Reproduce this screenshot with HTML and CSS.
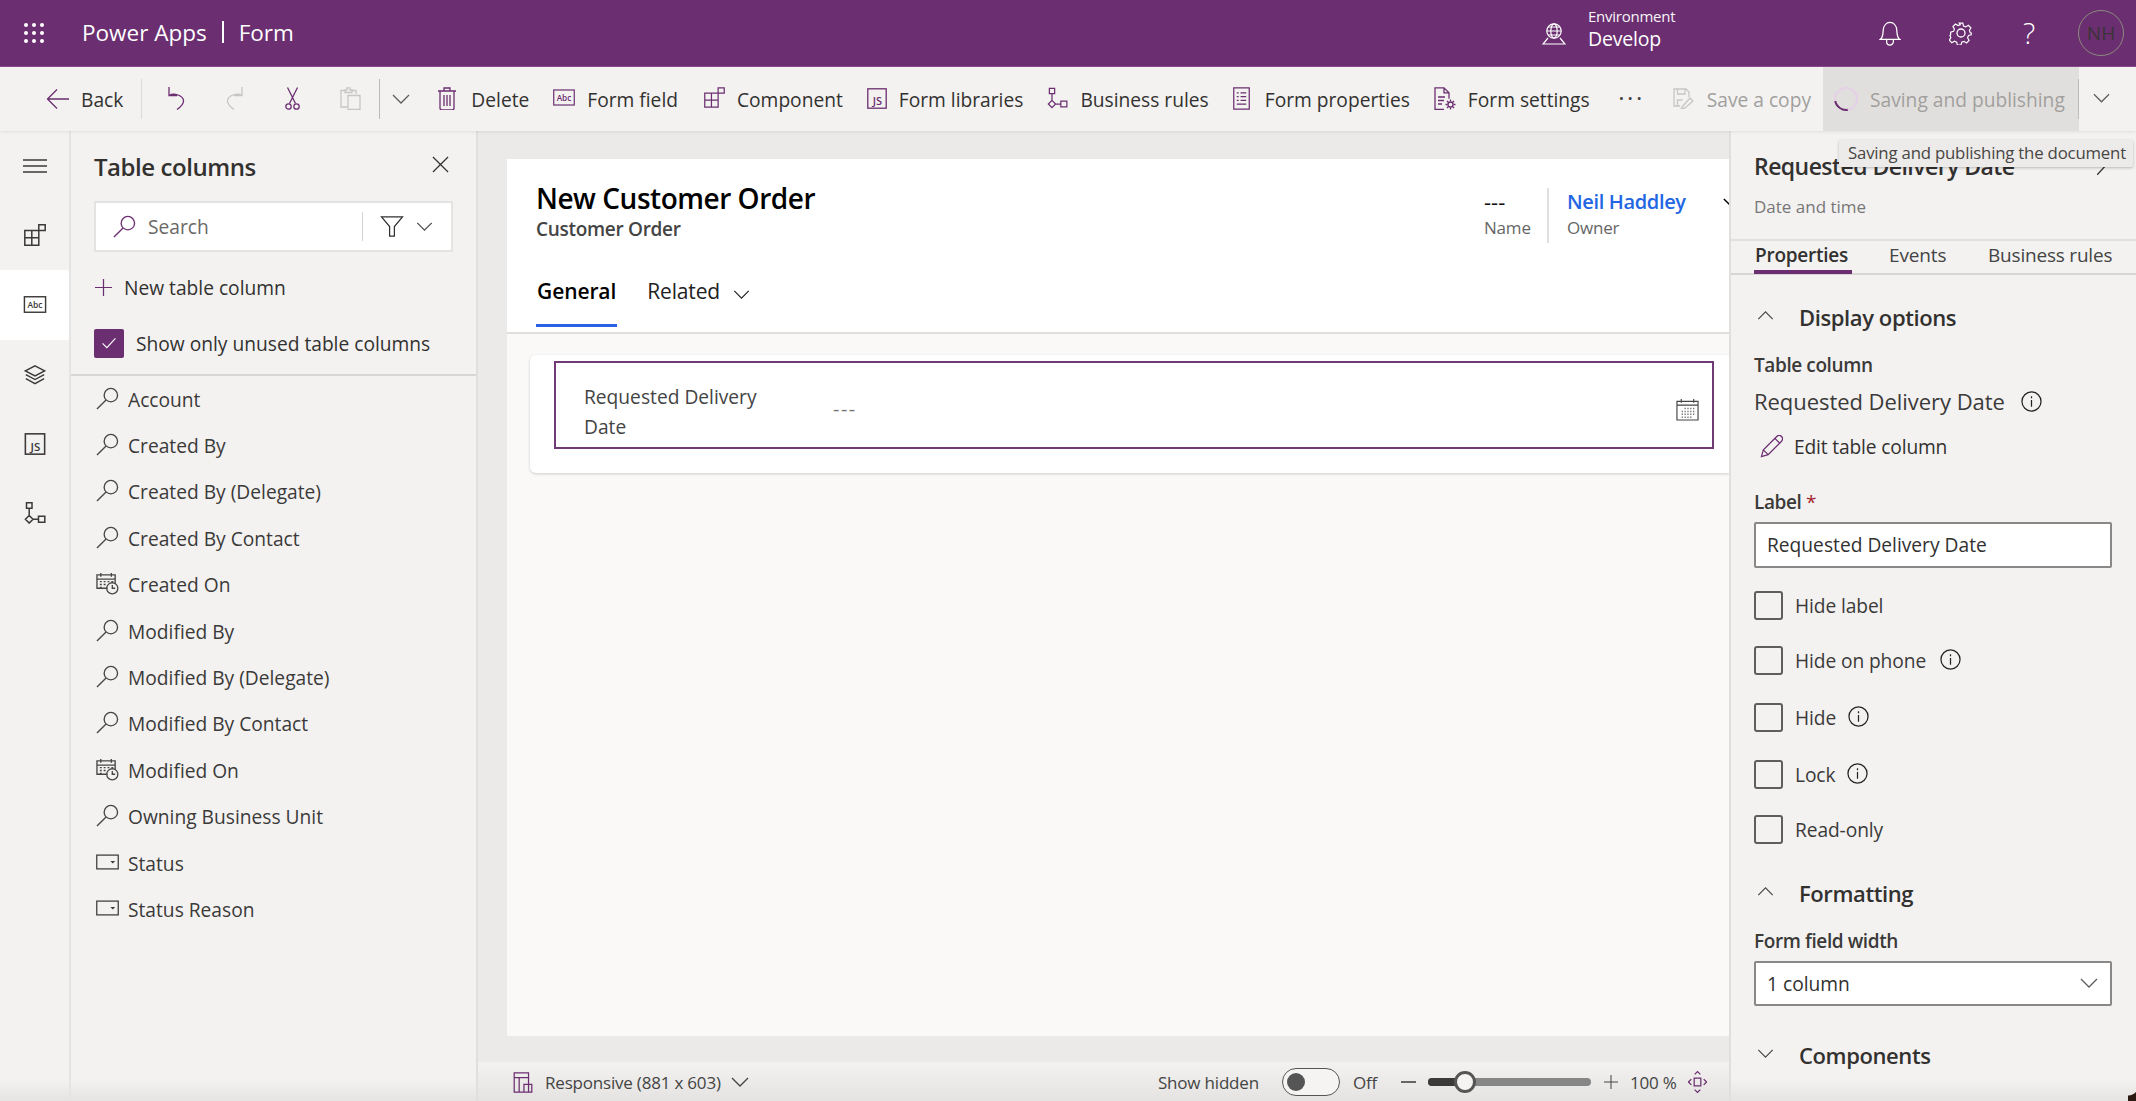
FILE: index.html
```html
<!DOCTYPE html>
<html lang="en">
<head>
<meta charset="utf-8">
<title>Power Apps | Form</title>
<link rel="stylesheet" href="styles.css">
</head>
<body>
<svg class="defs" aria-hidden="true">
  <defs>
    <symbol id="i-back" viewBox="0 0 24 24"><path d="M23 12H2M11 2.500 1.500 12l9.500 9.500"/></symbol>
    <symbol id="i-undo" viewBox="0 0 18 24"><path d="M2 1v8.500h8M2 9.500c5-3 14 0 14.500 5 .3 3-3 6.500-6.500 9"/></symbol>
    <symbol id="i-redo" viewBox="0 0 18 24"><path d="M16 1v8.500H8M16 9.500c-5-3-14 0-14.500 5-.3 3 3 6.500 6.500 9"/></symbol>
    <symbol id="i-cut" viewBox="0 0 15 23"><path d="M2.500 .5 10.500 16.500M12.500 .5 4.500 16.500"/><circle cx="3.500" cy="19.500" r="2.700"/><circle cx="11.500" cy="19.500" r="2.700"/></symbol>
    <symbol id="i-paste" viewBox="0 0 21 23"><path d="M7 20H1V3.500h4M12 3.500h4V7M5 5.500V3h2V.8h3V3h2v2.500zM8 8.500h12V22.500H8z"/></symbol>
    <symbol id="i-chev" viewBox="0 0 18 10"><path d="M1 1l8 8 8-8"/></symbol>
    <symbol id="i-trash" viewBox="0 0 18 23"><path d="M0 4h18M6 4V1h6v3M2 4v17a2 2 0 0 0 2 2h10a2 2 0 0 0 2-2V4M6 8v11M9 8v11M12 8v11"/></symbol>
    <symbol id="i-abc" viewBox="0 0 24 18"><rect x=".8" y=".8" width="22.400" height="16.400"/><text class="svg-text" x="12" y="13" text-anchor="middle">Abc</text></symbol>
    <symbol id="i-comp" viewBox="0 0 22 22"><path d="M.8 6.500h14v14.700H.8zM.8 13.800h14M7.800 6.500v14.700M14.800 .8h6.400v5.700h-6.400z"/></symbol>
    <symbol id="i-js" viewBox="0 0 20 21"><rect x=".8" y=".8" width="18.400" height="19.400"/><text class="svg-text svg-js" x="10.500" y="17" text-anchor="middle">JS</text></symbol>
    <symbol id="i-rules" viewBox="0 0 22 22"><path d="M2.500.8h5.500v5.500H2.500zM5.200 6.300v7.200M5.200 13.500l3.800 3.800-3.800 3.800-3.800-3.800zM9 17.300h5.500M14.500 14.300h6.300v6h-6.300z"/></symbol>
    <symbol id="i-props" viewBox="0 0 18 24"><path d="M.8.800h16.400v22.400H.8zM4 6h2M8 6h6M4 10h2M8 10h6M4 14h2M8 14h6M4 18h10"/></symbol>
    <symbol id="i-settings" viewBox="0 0 22 23"><path d="M10 22.500H1V.8h9l5 5v6M10 .8v5h5M4 10h7M4 13.500h6M4 17h4"/><circle cx="16.500" cy="17.500" r="2.500"/><path d="M16.500 12.500v2M16.500 20.500v2M11.500 17.500h2M19.500 17.500h2M13 14l1.500 1.500M18.500 19.500 20 21M20 14l-1.500 1.500M14.500 19.500 13 21"/></symbol>
    <symbol id="i-save" viewBox="0 0 22 21"><path d="M7 18H1V1h12l3 3v5M4.500 1v5h7.500V1M4.500 18v-6h5M9 19l8-9 3 3-8 7-4 1z"/></symbol>
    <symbol id="i-grid" viewBox="0 0 22 22"><circle cx="3" cy="3" r="2"/><circle cx="11" cy="3" r="2"/><circle cx="19" cy="3" r="2"/><circle cx="3" cy="11" r="2"/><circle cx="11" cy="11" r="2"/><circle cx="19" cy="11" r="2"/><circle cx="3" cy="19" r="2"/><circle cx="11" cy="19" r="2"/><circle cx="19" cy="19" r="2"/></symbol>
    <symbol id="i-globe" viewBox="0 0 24 22"><circle cx="12" cy="8" r="7.200"/><ellipse cx="12" cy="8" rx="3.200" ry="7.200"/><path d="M4.800 8h14.400M6 4h12M6 12h12M6 15l-5 6h22l-5-6"/></symbol>
    <symbol id="i-bell" viewBox="0 0 22 26"><path d="M1 19c3-2 2.500-6 3-10 .5-4 3-7.500 7-7.500s6.500 3.500 7 7.500c.5 4 0 8 3 10zM7.500 19.500v2a3.500 3.500 0 0 0 7 0v-2"/></symbol>
    <symbol id="i-gear" viewBox="0 0 24 24"><circle cx="12" cy="12" r="4"/><path d="M10 1h4l.8 3.200 2.500 1 2.900-1.700 2.800 2.800-1.700 2.900 1 2.500L23.500 12l-.2 2-3 .8-1 2.500 1.700 2.900-2.800 2.800-2.900-1.700-2.500 1-.8 3h-4l-.8-3.200-2.500-1-2.900 1.700-2.800-2.800 1.700-2.900-1-2.500L.5 14v-3l3.200-.8 1-2.500L3 4.800 5.800 2l2.900 1.700 2.500-1z" transform="translate(1.200 1.200) scale(.9)"/></symbol>
    <symbol id="i-menu" viewBox="0 0 24 14"><path d="M0 1h24M0 7h24M0 13h24"/></symbol>
    <symbol id="i-layers" viewBox="0 0 24 22"><path d="M12 1l10.500 5.500L12 12 1.500 6.500zM2 10.500 12 16l10-5.500M2 15l10 5.500L22 15"/></symbol>
    <symbol id="i-close" viewBox="0 0 18 18"><path d="M1 1l16 16M17 1 1 17"/></symbol>
    <symbol id="i-slash" viewBox="0 0 11 12"><path d="M0 12 11 0"/></symbol>
    <symbol id="i-lens" viewBox="0 0 24 24"><circle cx="15.500" cy="8.500" r="7"/><path d="M10.500 13.500 1 23"/></symbol>
    <symbol id="i-filter" viewBox="0 0 24 22"><path d="M1 1h22l-8.500 10v10h-5V11z"/></symbol>
    <symbol id="i-plus" viewBox="0 0 18 18"><path d="M9 0v18M0 9h18"/></symbol>
    <symbol id="i-check" viewBox="0 0 18 14"><path d="M1.500 7.500 6.500 12.500 16.500 1.500"/></symbol>
    <symbol id="i-calclock" viewBox="0 0 24 24"><path d="M12 17H1V3h19v9M1 7.500h19M5 1v4M16 1v4M4 10h2M8 10h2M12 10h2M16 10h2M4 13h2M8 13h2M4 16h2M8 16h0"/><circle cx="17" cy="17" r="5.800"/><path d="M17 13.500V17h3"/></symbol>
    <symbol id="i-option" viewBox="0 0 24 16"><rect x=".8" y=".8" width="22.400" height="14.400"/><path class="solid" d="M15 7h5l-2.500 2.500z"/></symbol>
    <symbol id="i-cal" viewBox="0 0 24 24"><path d="M1 3.500h22V23H1zM1 7.500h22M5.500 1v4M18.500 1v4"/><path class="dots" d="M9 11h1M12 11h1M15 11h1M18 11h1M6 14h1M9 14h1M12 14h1M15 14h1M18 14h1M6 17h1M9 17h1M12 17h1M15 17h1M18 17h1M6 20h1M9 20h1M12 20h1M15 20h1"/></symbol>
    <symbol id="i-info" viewBox="0 0 22 22"><circle cx="11" cy="11" r="10"/><path d="M11 9.500v7M11 5.500v2"/></symbol>
    <symbol id="i-pencil" viewBox="0 0 24 24"><path d="M1.500 22.500l2-7L17.500 1.500a2.800 2.800 0 0 1 5 5L8.500 20.500zM3.500 15.500l5 5M15.500 3.500l5 5"/></symbol>
    <symbol id="i-responsive" viewBox="0 0 20 22"><path d="M.8.800h15v20.400H.8zM.8 6h15M6 6v15.200M11 13h8.200v8.200H11z"/></symbol>
    <symbol id="i-fit" viewBox="0 0 20 24"><path d="M6.500 8h7v8h-7zM7 4l3-3 3 3M7 20l3 3 3-3M3.500 9l-3 3 3 3M16.500 9l3 3-3 3"/></symbol>
    <symbol id="i-up" viewBox="0 0 18 10"><path d="M1 9l8-8 8 8"/></symbol>
  </defs>
</svg>

<header class="topbar">
  <svg class="ic-grid"><use href="#i-grid"/></svg>
  <div class="brand"><span>Power Apps</span><span class="brand-sep"></span><span>Form</span></div>
  <div class="top-right">
    <svg class="ic-globe"><use href="#i-globe"/></svg>
    <div class="env"><div class="env-label">Environment</div><div class="env-name">Develop</div></div>
    <svg class="ic-bell"><use href="#i-bell"/></svg>
    <svg class="ic-gear"><use href="#i-gear"/></svg>
    <span class="help">?</span>
    <div class="avatar">NH</div>
  </div>
</header>

<nav class="toolbar">
  <div class="cmd cmd-back"><svg class="tb-i w24"><use href="#i-back"/></svg><span>Back</span></div>
  <span class="tb-sep sep-a"></span>
  <svg class="tb-i ic-undo"><use href="#i-undo"/></svg>
  <svg class="tb-i off ic-redo"><use href="#i-redo"/></svg>
  <svg class="tb-i ic-cut"><use href="#i-cut"/></svg>
  <svg class="tb-i off ic-paste"><use href="#i-paste"/></svg>
  <span class="tb-sep sep-b"></span>
  <svg class="tb-i plain ic-more"><use href="#i-chev"/></svg>
  <div class="cmds">
    <div class="cmd"><svg class="tb-i ic-trash"><use href="#i-trash"/></svg><span>Delete</span></div>
    <div class="cmd"><svg class="tb-i ic-abc"><use href="#i-abc"/></svg><span>Form field</span></div>
    <div class="cmd cmd-comp"><svg class="tb-i ic-comp"><use href="#i-comp"/></svg><span>Component</span></div>
    <div class="cmd"><svg class="tb-i ic-js"><use href="#i-js"/></svg><span>Form libraries</span></div>
    <div class="cmd"><svg class="tb-i ic-rules"><use href="#i-rules"/></svg><span>Business rules</span></div>
    <div class="cmd"><svg class="tb-i ic-props"><use href="#i-props"/></svg><span>Form properties</span></div>
    <div class="cmd"><svg class="tb-i ic-settings"><use href="#i-settings"/></svg><span>Form settings</span></div>
  </div>
  <div class="tb-right">
    <span class="dots-h">···</span>
    <div class="cmd cmd-off"><svg class="tb-i off ic-save"><use href="#i-save"/></svg><span>Save a copy</span></div>
    <div class="saving">
      <span class="spinner"></span><span>Saving and publishing</span>
    </div>
    <div class="split"><svg class="tb-i plain ic-more"><use href="#i-chev"/></svg></div>
  </div>
</nav>

<div class="tooltip">Saving and publishing the document</div>

<main class="main">
  <aside class="rail">
    <div class="rail-item"><svg class="ic-menu"><use href="#i-menu"/></svg></div>
    <div class="rail-item"><svg class="ic-rail"><use href="#i-comp"/></svg></div>
    <div class="rail-item active"><svg class="ic-rail-abc"><use href="#i-abc"/></svg></div>
    <div class="rail-item"><svg class="ic-rail"><use href="#i-layers"/></svg></div>
    <div class="rail-item"><svg class="ic-rail"><use href="#i-js"/></svg></div>
    <div class="rail-item"><svg class="ic-rail"><use href="#i-rules"/></svg></div>
  </aside>

  <aside class="panel">
    <div class="panel-head">
      <h2 class="panel-title">Table columns</h2>
      <svg class="ic-close"><use href="#i-close"/></svg>
    </div>
    <div class="search">
      <svg class="ic-lens purple"><use href="#i-lens"/></svg>
      <span class="search-text">Search</span>
      <span class="search-sep"></span>
      <svg class="ic-filter"><use href="#i-filter"/></svg>
      <svg class="ic-chev-sm"><use href="#i-chev"/></svg>
    </div>
    <div class="new-col"><svg class="ic-plus"><use href="#i-plus"/></svg><span>New table column</span></div>
    <div class="only-unused">
      <span class="check-on"><svg class="ic-check"><use href="#i-check"/></svg></span>
      <span>Show only unused table columns</span>
    </div>
    <ul class="col-list">
      <li><svg class="ic-lens"><use href="#i-lens"/></svg>Account</li>
      <li><svg class="ic-lens"><use href="#i-lens"/></svg>Created By</li>
      <li><svg class="ic-lens"><use href="#i-lens"/></svg>Created By (Delegate)</li>
      <li><svg class="ic-lens"><use href="#i-lens"/></svg>Created By Contact</li>
      <li><svg class="ic-lens"><use href="#i-calclock"/></svg>Created On</li>
      <li><svg class="ic-lens"><use href="#i-lens"/></svg>Modified By</li>
      <li><svg class="ic-lens"><use href="#i-lens"/></svg>Modified By (Delegate)</li>
      <li><svg class="ic-lens"><use href="#i-lens"/></svg>Modified By Contact</li>
      <li><svg class="ic-lens"><use href="#i-calclock"/></svg>Modified On</li>
      <li><svg class="ic-lens"><use href="#i-lens"/></svg>Owning Business Unit</li>
      <li><svg class="ic-option"><use href="#i-option"/></svg>Status</li>
      <li><svg class="ic-option"><use href="#i-option"/></svg>Status Reason</li>
    </ul>
  </aside>

  <section class="center">
    <div class="form">
      <div class="form-head">
        <div class="form-top">
          <div class="form-titles">
            <h1 class="form-title">New Customer Order</h1>
            <div class="form-sub">Customer Order</div>
          </div>
          <div class="head-fields">
            <div class="hf hf-name"><div class="hf-val">---</div><div class="hf-lab">Name</div></div>
            <div class="hf hf-owner"><div class="hf-link">Neil Haddley</div><div class="hf-lab">Owner</div></div>
            <svg class="ic-clip"><use href="#i-chev"/></svg>
          </div>
        </div>
        <div class="form-tabs">
          <div class="ftab ftab-on">General</div>
          <div class="ftab">Related<svg class="ic-rel"><use href="#i-chev"/></svg></div>
        </div>
      </div>
      <div class="form-body">
        <div class="card">
          <div class="field">
            <div class="field-label">Requested Delivery Date</div>
            <div class="field-val">---</div>
            <svg class="ic-cal"><use href="#i-cal"/></svg>
          </div>
        </div>
      </div>
    </div>
    <footer class="status">
      <svg class="ic-resp"><use href="#i-responsive"/></svg>
      <span class="st-text">Responsive (881 x 603)</span>
      <svg class="ic-st-chev"><use href="#i-chev"/></svg>
      <span class="st-text st-hidden">Show hidden</span>
      <span class="toggle"><span class="knob"></span></span>
      <span class="st-text st-off">Off</span>
      <span class="st-minus"></span>
      <span class="slider"><span class="slider-fill"></span><span class="thumb"></span></span>
      <svg class="ic-st-plus"><use href="#i-plus"/></svg>
      <span class="st-text st-pct">100 %</span>
      <svg class="ic-fit"><use href="#i-fit"/></svg>
    </footer>
  </section>

  <aside class="props">
    <div class="props-head">
      <div class="props-title">Requested Delivery Date</div>
      <svg class="ic-props-arrow"><use href="#i-slash"/></svg>
      <div class="props-sub">Date and time</div>
    </div>
    <div class="props-tabs">
      <div class="ptab ptab-on">Properties</div>
      <div class="ptab ptab-ev">Events</div>
      <div class="ptab ptab-br">Business rules</div>
    </div>
    <div class="section-head sh-display"><svg class="ic-sec"><use href="#i-up"/></svg><span>Display options</span></div>
    <div class="lab lab-col">Table column</div>
    <div class="col-name"><span>Requested Delivery Date</span><svg class="ic-info"><use href="#i-info"/></svg></div>
    <div class="edit-col"><svg class="ic-pencil"><use href="#i-pencil"/></svg><span>Edit table column</span></div>
    <div class="lab lab-label">Label <span class="req">*</span></div>
    <div class="input">Requested Delivery Date</div>
    <div class="cb cb-1"><span class="box"></span><span>Hide label</span></div>
    <div class="cb cb-2"><span class="box"></span><span>Hide on phone</span><svg class="ic-info cb-info"><use href="#i-info"/></svg></div>
    <div class="cb cb-3"><span class="box"></span><span>Hide</span><svg class="ic-info cb-info"><use href="#i-info"/></svg></div>
    <div class="cb cb-3"><span class="box"></span><span>Lock</span><svg class="ic-info cb-info"><use href="#i-info"/></svg></div>
    <div class="cb cb-5"><span class="box"></span><span>Read-only</span></div>
    <div class="section-head sh-format"><svg class="ic-sec"><use href="#i-up"/></svg><span>Formatting</span></div>
    <div class="lab lab-width">Form field width</div>
    <div class="input select"><span>1 column</span><svg class="ic-sel"><use href="#i-chev"/></svg></div>
    <div class="section-head sh-comp"><svg class="ic-sec"><use href="#i-chev"/></svg><span>Components</span></div>
  </aside>
</main>
<div class="corner"></div>
</body>
</html>
```
FILE: styles.css
```css
* { box-sizing: border-box; }
html, body { margin: 0; padding: 0; }
body {
  width: 2136px; height: 1101px; overflow: hidden; position: relative;
  display: flex; flex-direction: column;
  font-family: "Open Sans", "Noto Sans", sans-serif;
  font-size: 19.2px; color: #323130;
  background: linear-gradient(#f3f2f1 calc(100% - 22px), #e5e4e2);
}
.defs { position: absolute; width: 0; height: 0; }
svg { display: block; flex: none; fill: none; stroke: currentColor; stroke-width: 1.3; overflow: visible; }
.svg-text { font: 600 9px "Open Sans", sans-serif; fill: currentColor; stroke: none; }
.svg-js { font-size: 11px; }
.solid { fill: currentColor; stroke: none; }
.dots { stroke-width: 1.5; }

/* top bar */
.topbar {
  height: 67px; flex: none; background: #6b2e70; border-bottom: 1px solid #8b4a90; color: #fff;
  display: flex; align-items: center; padding-left: 23px;
}
.ic-grid { width: 22px; height: 22px; fill: #fff; stroke: none; margin-top: -1px; }
.brand { margin-left: 37px; font-size: 22.500px; font-weight: 500; display: flex; align-items: center; margin-top: -2px; }
.brand-sep { width: 2px; height: 22px; background: #fff; margin: 0 15px 0 15px; }
.top-right { margin-left: auto; display: flex; align-items: center; }
.ic-globe { width: 24px; height: 22px; margin-top: 2px; stroke-width: 1.2; }
.env { margin-left: 22px; width: 291px; margin-top: -8px; }
.env-label { font-size: 15px; line-height: 20px; letter-spacing: -.25px; opacity: .95; }
.env-name { font-size: 19.500px; line-height: 26px; letter-spacing: -.2px; }
.ic-bell { width: 22px; height: 25px; }
.ic-gear { width: 24px; height: 24px; margin-left: 48px; }
.help { margin-left: 50px; font-size: 29px; font-weight: 300; line-height: 1; width: 16px; margin-top: -2px; }
.avatar {
  width: 46px; height: 46px; margin-left: 39px; margin-right: 12px; border-radius: 50%;
  border: 1.5px solid #8c8c80; display: flex; align-items: center; justify-content: center;
  color: #3a3338; font-size: 19px;
}

/* toolbar */
.toolbar {
  height: 64px; flex: none; background: #f3f2f1; display: flex; align-items: center;
  padding-left: 46px; position: relative; z-index: 2; box-shadow: 0 1px 3px rgba(0,0,0,.08);
}
.cmd { display: flex; align-items: center; gap: 12px; color: #323130; white-space: nowrap; }
.cmd-back { gap: 11px; }
.cmd-back svg { width: 24px; height: 24px; }
.tb-i { color: #6b2e70; stroke-width: 1.3; }
.tb-i.off { color: #c8c6c4; }
.tb-i.plain { color: #605e5c; }
.w24 { width: 24px; }
.tb-sep { width: 1px; height: 40px; background: #dcdad8; }
.sep-a { margin-left: 18px; }
.sep-b { margin-left: 18px; background: #bdbbb9; }
.ic-undo { width: 18px; height: 24px; margin-left: 25px; margin-top: -2px; }
.ic-redo { width: 18px; height: 24px; margin-left: 41px; margin-top: -2px; }
.ic-cut { width: 15px; height: 23px; margin-left: 41px; margin-top: -1px; }
.ic-paste { width: 21px; height: 23px; margin-left: 40px; margin-top: -1px; }
.ic-more { width: 18px; height: 10px; margin-left: 12px; }
.cmds { display: flex; align-items: center; gap: 24px; margin-left: 28px; }
.ic-trash { width: 18px; height: 23px; margin-right: 3px; margin-top: -2px; }
.ic-abc { width: 22px; height: 17px; margin-top: -4px; }
.cmd-comp { margin-left: 2px; }
.ic-comp { width: 21px; height: 21px; margin-top: -3px; }
.ic-js { width: 20px; height: 21px; margin-top: -2px; }
.ic-rules { width: 21px; height: 22px; margin-top: -3px; }
.ic-props { width: 17px; height: 23px; margin-right: 3px; margin-top: -2px; }
.ic-settings { width: 22px; height: 23px; margin-top: -2px; }
.tb-right { margin-left: auto; display: flex; align-items: center; height: 100%; }
.dots-h { font-size: 24px; color: #444; letter-spacing: 2.500px; margin-right: 28px; line-height: 1; margin-top: -2px; }
.cmd-off { color: #a19f9d; margin-right: 12px; }
.ic-save { width: 22px; height: 21px; margin-top: -2px; }
.saving {
  width: 256px; height: 100%; background: #e1dfdd; color: #a19f9d; display: flex; align-items: center;
  gap: 12px; padding-left: 11px; white-space: nowrap; position: relative;
}
.saving::after { content: ""; position: absolute; right: 0; top: 12px; height: 40px; width: 1px; background: #bdbbb9; }
.spinner {
  width: 24px; height: 24px; border-radius: 50%; border: 2px solid #e6cfe8; border-bottom-color: #6b2e70;
  transform: rotate(35deg); flex: none;
}
.split { width: 57px; }
.split .ic-more { margin-left: 14px; width: 17px; margin-top: -2px; }

/* tooltip */
.tooltip {
  position: absolute; left: 1839px; top: 140px; width: 294px; height: 27px; z-index: 5;
  background: #ecebe9; color: #484644; font-size: 16.800px; line-height: 26px; padding-left: 9px;
  box-shadow: 0 1px 3px rgba(0,0,0,.25); border-radius: 2px; white-space: nowrap; letter-spacing: -.2px;
}

/* main */
.main { flex: 1; display: flex; min-height: 0; }
.rail { width: 71px; flex: none; border-right: 2px solid #e6e4e2; }
.rail-item { height: 69px; display: flex; align-items: center; justify-content: center; color: #3b3a39; width: 69px; }
.rail-item svg { stroke-width: 1.5; }
.rail-item:first-child { height: 60px; padding-top: 10px; }
.rail-item:nth-child(2) { height: 79px; padding-top: 8px; }
.rail-item.active { background: #fff; height: 70px; border-radius: 0 2px 2px 0; }
.ic-menu { width: 24px; height: 14px; }
.ic-rail { width: 22px; height: 22px; }
.ic-rail-abc { width: 24px; height: 17px; margin-top: -2px; }

.panel { width: 407px; flex: none; border-right: 2px solid #e1dfdd; display: flex; flex-direction: column; }
.panel-head { height: 70px; padding: 0 27px 0 23px; display: flex; align-items: center; justify-content: space-between; }
.panel-title { margin: 0; font-size: 24px; font-weight: 600; letter-spacing: -.45px; }
.ic-close { width: 17px; height: 17px; margin-top: -4px; color: #323130; }
.search {
  margin-left: 23px; width: 359px; height: 51px; background: #fff; border: 2px solid #e5e3e1;
  display: flex; align-items: center; padding-left: 17px;
}
.ic-lens { width: 23px; height: 23px; color: #484644; stroke-width: 1.4; }
.ic-lens.purple { color: #6b2e70; }
.search-text { margin-left: 12px; color: #6a6866; width: 62px; }
.search-sep { margin-left: 152px; width: 1px; height: 29px; background: #d5d3d1; }
.ic-filter { width: 24px; height: 21px; margin-left: 17px; color: #323130; }
.ic-chev-sm { width: 17px; height: 9px; margin-left: 12px; color: #484644; }
.new-col { height: 40px; margin-top: 16px; margin-left: 24px; display: flex; align-items: center; gap: 12px; margin-top: 15px; margin-bottom: 1px; }
.ic-plus { width: 17px; height: 17px; color: #6b2e70; }
.only-unused { margin-top: 20px; margin-left: 23px; display: flex; align-items: center; gap: 12px; height: 30px; }
.check-on { width: 30px; height: 29px; background: #6b2e70; border-radius: 2px; display: flex; align-items: center; justify-content: center; }
.ic-check { width: 16px; height: 12px; color: #fff; }
.col-list { list-style: none; margin: 16px 0 0; padding: 0 0 0 25px; border-top: 2px solid #d8d6d4; }
.col-list li { height: 46.4px; display: flex; align-items: center; gap: 9px; color: #3b3a39; }
.col-list svg { margin-top: -2px; }
.ic-option { width: 23px; height: 16px; color: #3b3a39; }

/* center */
.center { width: 1251px; flex: none; background: #ebeae8; display: flex; flex-direction: column; padding-top: 28px; }
.form { margin-left: 29px; height: 877px; flex: none; background: #faf9f8; overflow: hidden; display: flex; flex-direction: column; }
.form-head { height: 175px; flex: none; background: #fff; border-bottom: 2px solid #e1dfdd; padding-left: 29px; }
.form-top { display: flex; justify-content: space-between; height: 106px; }
.form-titles { padding-top: 20px; }
.form-title { margin: 0; font-size: 28px; line-height: 38px; font-weight: 600; color: #000; letter-spacing: -.47px; }
.form-sub { font-size: 19px; font-weight: 600; line-height: 24px; color: #444; letter-spacing: -.3px; }
.head-fields { display: flex; align-items: flex-start; padding-top: 29px; position: relative; width: 245px; }
.hf { height: 55px; }
.hf-name { width: 65px; border-right: 2px solid #e1dfdd; margin-right: 18px; }
.hf-val { font-size: 22px; line-height: 27px; color: #111; }
.hf-lab { font-size: 17px; line-height: 26px; color: #666; letter-spacing: -.2px; }
.hf-link { font-size: 20px; line-height: 27px; color: #2266e3; font-weight: 600; letter-spacing: -.35px; white-space: nowrap; }
.ic-clip { position: absolute; right: -10px; top: 39px; width: 16px; height: 9px; color: #000; stroke-width: 1.6; }
.form-tabs { display: flex; gap: 30px; height: 67px; padding-top: 1px; }
.ftab { font-size: 21px; color: #222; display: flex; align-items: flex-start; padding-top: 11px; height: 61px; letter-spacing: -.15px; }
.ftab-on { font-weight: 600; color: #000; border-bottom: 3px solid #2b62e3; padding-left: 1px; padding-right: 1px; letter-spacing: -.1px; }
.ic-rel { width: 17px; height: 9px; margin-left: 13px; margin-top: 13px; color: #222; }
.form-body { padding: 21px 0 0 23px; }
.card { height: 118px; background: #fff; border-radius: 6px 0 0 6px; box-shadow: 0 1px 3px rgba(0,0,0,.18); padding: 6px 15px 0 24px; }
.field { height: 88px; border: 2px solid #703a75; position: relative; display: flex; align-items: center; padding-left: 28px; }
.field-label { width: 185px; line-height: 30px; color: #444; margin-top: 14px; }
.field-val { margin-left: 64px; color: #777; font-size: 20px; letter-spacing: 1.500px; margin-top: 6px; }
.ic-cal { position: absolute; right: 13px; top: 35px; width: 23px; height: 23px; color: #444; stroke-width: 1.2; }

/* status */
.status {
  margin-top: 26px; flex: 1; display: flex; align-items: center; padding-left: 35px; font-size: 17px;
  background: linear-gradient(#f3f2f1, #e4e3e1); color: #444; padding-top: 1px;
}
.ic-resp { width: 20px; height: 21px; color: #6b2e70; }
.st-text { white-space: nowrap; letter-spacing: -.2px; }
.status > .st-text:nth-of-type(1) { margin-left: 12px; width: 176px; }
.ic-st-chev { width: 18px; height: 10px; margin-left: 10px; }
.st-hidden { margin-left: 409px; width: 100px; }
.toggle { width: 58px; height: 28px; border: 1.5px solid #555; border-radius: 14px; margin-left: 24px; background: #f5f4f3; display: flex; align-items: center; padding-left: 4px; }
.knob { width: 18px; height: 18px; border-radius: 50%; background: #555; }
.st-off { margin-left: 13px; width: 24px; }
.st-minus { width: 15px; height: 1.5px; background: #666; margin-left: 24px; }
.slider { width: 163px; height: 8px; border-radius: 4px; margin-left: 12px; background: #868686; position: relative; }
.slider-fill { position: absolute; left: 0; top: 0; bottom: 0; width: 37px; background: #3b3a39; border-radius: 4px 0 0 4px; }
.thumb { position: absolute; left: 26px; top: -7px; width: 22px; height: 22px; border-radius: 50%; background: #f5f4f3; border: 3px solid #555; }
.ic-st-plus { width: 14px; height: 14px; margin-left: 13px; }
.st-pct { margin-left: 12px; width: 48px; }
.ic-fit { width: 19px; height: 24px; margin-left: 10px; color: #6b2e70; }

/* properties */
.props { flex: 1; border-left: 2px solid #e1dfdd; padding-left: 23px; overflow: hidden; }
.props-head { height: 110px; position: relative; margin-left: -23px; padding-left: 23px; border-bottom: 2px solid #e1dfdd; }
.props-title { font-size: 23px; font-weight: 600; line-height: 30px; padding-top: 20px; height: 51px; letter-spacing: -.55px; white-space: nowrap; }
.props-sub { font-size: 17px; color: #777; margin-top: 13px; line-height: 24px; }
.ic-props-arrow { position: absolute; right: 28px; top: 32px; width: 11px; height: 12px; }
.props-tabs { margin-left: -23px; padding-left: 23px; display: flex; height: 34px; border-bottom: 2px solid #d8d6d4; }
.ptab { font-size: 19px; line-height: 28px; white-space: nowrap; color: #444; letter-spacing: -.15px; }
.ptab-on { font-weight: 600; color: #323130; width: 98px; height: 33px; border-bottom: 4px solid #6b2e70; padding-left: 1px; letter-spacing: -.25px; }
.ptab-ev { margin-left: 37px; width: 99px; }
.ptab-br { letter-spacing: -.2px; }
.section-head { display: flex; align-items: center; font-size: 22px; font-weight: 600; letter-spacing: -.4px; height: 30px; color: #323130; }
.section-head span { margin-left: 25px; }
.ic-sec { width: 17px; height: 9px; margin-left: 3px; color: #484644; margin-top: -3px; }
.sh-display { margin-top: 27px; }
.lab { font-size: 19px; font-weight: 600; color: #3b3a39; letter-spacing: -.4px; line-height: 26px; }
.lab-col { margin-top: 20px; }
.col-name { display: flex; align-items: center; gap: 16px; font-size: 22px; line-height: 30px; margin-top: 8px; color: #3b3a39; letter-spacing: -.05px; }
.ic-info { width: 21px; height: 21px; color: #222; }
.col-name .ic-info { margin-top: 1px; }
.edit-col { display: flex; align-items: center; gap: 11px; margin-top: 15px; margin-left: 6px; height: 30px; letter-spacing: -.15px; }
.ic-pencil { width: 23px; height: 23px; color: #6b2e70; }
.lab-label { margin-top: 28px; }
.req { color: #a4262c; font-weight: 400; }
.input {
  width: 358px; height: 46px; background: #fff; border: 2px solid #8a8886; border-radius: 2px;
  margin-top: 7px; padding-left: 11px; display: flex; align-items: center; padding-bottom: 1px;
}
.cb { display: flex; align-items: center; gap: 12px; height: 29px; color: #3b3a39; letter-spacing: -.1px; }
.box { width: 29px; height: 29px; border: 2px solid #605e5c; border-radius: 3px; flex: none; }
.cb-1 { margin-top: 23px; }
.cb-2 { margin-top: 26px; }
.cb-2 .cb-info { margin-left: 2px; }
.cb-3 { margin-top: 28px; }
.cb-5 { margin-top: 26px; }
.cb-info { margin-top: -3px; }
.sh-format { margin-top: 34px; }
.lab-width { margin-top: 20px; }
.select { margin-top: 7px; justify-content: space-between; padding-right: 12px; height: 45px; }
.ic-sel { width: 18px; height: 10px; color: #605e5c; }
.sh-comp { margin-top: 34px; }
.corner {
  position: absolute; right: 0; bottom: 0; width: 8px; height: 16px;
  background: radial-gradient(circle at 0 0, transparent 10px, #2a1a12 11px);
}
```
